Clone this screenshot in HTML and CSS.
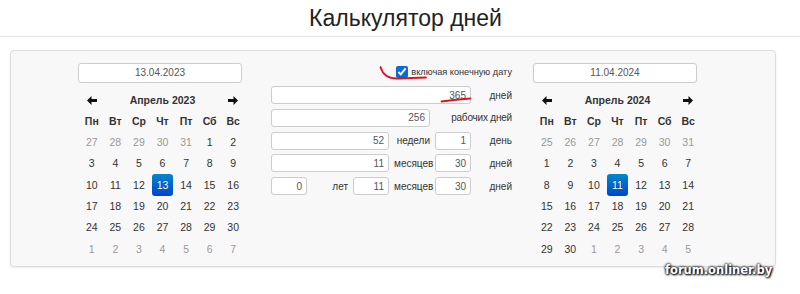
FILE: index.html
```html
<!DOCTYPE html>
<html lang="ru">
<head>
    <meta charset="UTF-8">
    <title>Калькулятор дней</title>
    <link rel="stylesheet" href="styles.css">
</head>
<body>
    <div class="page-head">
        <h1>Калькулятор дней</h1>
    </div>

    <div class="panel">
        <div class="cal-col">
            <input class="date-input" type="text" value="13.04.2023">
            <div class="cal" id="cal-start"></div>
        </div>

        <div class="mid">
            <label class="incl"><input type="checkbox" checked>включая конечную дату</label>
            <div class="calc">
                <input class="num span5" type="text" value="365"><span class="lbl">дней</span>
                <input class="num span4" type="text" value="256"><span class="lbl span2">рабочих дней</span>
                <input class="num span3" type="text" value="52"><span class="lbl">недели</span><input class="num" type="text" value="1"><span class="lbl">день</span>
                <input class="num span3" type="text" value="11"><span class="lbl">месяцев</span><input class="num" type="text" value="30"><span class="lbl">дней</span>
                <input class="num" type="text" value="0"><span class="lbl">лет</span><input class="num" type="text" value="11"><span class="lbl">месяцев</span><input class="num" type="text" value="30"><span class="lbl">дней</span>
            </div>
        </div>

        <div class="cal-col cal-right">
            <input class="date-input" type="text" value="11.04.2024">
            <div class="cal" id="cal-end"></div>
        </div>
    </div>

    <!-- red pen marks from the forum post -->
    <svg class="marks" width="800" height="294" viewBox="0 0 800 294">
        <path d="M380.5 67 Q384 79 398 78.5 L426 77.5" />
        <path d="M441.5 101.5 Q456 99.5 470.5 98.5" />
    </svg>

    <div class="watermark">forum.onliner.by</div>

    <script>
        const monthNames = ['Январь', 'Февраль', 'Март', 'Апрель', 'Май', 'Июнь',
            'Июль', 'Август', 'Сентябрь', 'Октябрь', 'Ноябрь', 'Декабрь'];
        const dayNames = ['Пн', 'Вт', 'Ср', 'Чт', 'Пт', 'Сб', 'Вс'];

        const arrowLeft = '<svg width="10" height="9" viewBox="0 0 10 9"><path d="M0 4.5 L4.5 0 V3 H10 V6 H4.5 V9 Z" fill="#111"/></svg>';
        const arrowRight = '<svg width="10" height="9" viewBox="0 0 10 9"><path d="M10 4.5 L5.5 0 V3 H0 V6 H5.5 V9 Z" fill="#111"/></svg>';

        function buildCal(id, year, month, selected) {
            const el = document.getElementById(id);
            let html = '<span class="nav">' + arrowLeft + '</span>';
            html += '<span class="month">' + monthNames[month] + ' ' + year + '</span>';
            html += '<span class="nav">' + arrowRight + '</span>';
            dayNames.forEach(d => { html += '<span class="dow">' + d + '</span>'; });

            // monday first; a full week of the previous month if the 1st is a monday
            let offset = (new Date(year, month, 1).getDay() + 6) % 7;
            if (offset === 0) offset = 7;
            const start = new Date(year, month, 1 - offset);

            for (let i = 0; i < 42; i++) {
                const d = new Date(start.getFullYear(), start.getMonth(), start.getDate() + i);
                let cls = 'day';
                if (d.getMonth() !== month) cls += ' old';
                if (d.getMonth() === month && d.getDate() === selected) cls += ' active';
                html += '<span class="' + cls + '">' + d.getDate() + '</span>';
            }
            el.innerHTML = html;
        }

        buildCal('cal-start', 2023, 3, 13);
        buildCal('cal-end', 2024, 3, 11);
    </script>
</body>
</html>
```

FILE: styles.css
```css
body {
    margin: 0;
    font-family: "Liberation Sans", Arial, sans-serif;
    color: #333;
    background: #fff;
    position: relative;
    height: 294px;
    overflow: hidden;
}
.page-head {
    height: 36px;
    border-bottom: 1px solid #e5e5e5;
    text-align: center;
}
.page-head h1 {
    margin: 0;
    font-size: 23px;
    font-weight: normal;
    line-height: 37px;
    color: #222;
    padding-left: 11px;
}
.panel {
    box-sizing: border-box;
    width: 766px;
    height: 217px;
    margin: 13px 0 0 10px;
    padding: 11px 0 0 67px;
    background-color: #f8f8f8;
    border: 1px solid #ddd;
    border-radius: 4px;
    box-shadow: 0 1px 2px rgba(0,0,0,0.08);
    display: flex;
    align-items: flex-start;
}
.cal-col {
    width: 167px;
}
.cal-right {
    margin-left: 21px;
}
.date-input {
    box-sizing: border-box;
    width: 164px;
    height: 20px;
    margin: 0;
    padding: 0 4px;
    border: 1px solid #ccc;
    border-radius: 3px;
    background: #fff;
    font-family: inherit;
    font-size: 10px;
    color: #555;
    text-align: center;
    outline: none;
}
.cal {
    margin: 7px 0 0 2px;
    width: 165px;
    display: grid;
    grid-template-columns: repeat(7, 1fr);
    grid-auto-rows: 21.33px;
    font-size: 10.5px;
    align-items: center;
    text-align: center;
}
.cal .nav {
    display: flex;
    justify-content: center;
    align-items: center;
}
.cal .month {
    grid-column: span 5;
    font-weight: bold;
    font-size: 10.5px;
}
.cal .dow {
    font-weight: bold;
}
.cal .day {
    height: 21.33px;
    line-height: 21.33px;
}
.cal .old {
    color: #999;
}
.cal .active {
    color: #fff;
    border-radius: 3px;
    background-image: linear-gradient(to bottom, #0088cc, #0044cc);
    text-shadow: 0 -1px 0 rgba(0,0,0,0.25);
    height: 22px;
    line-height: 22px;
    margin: 0 1px;
}
.mid {
    margin-left: 26px;
    width: 241px;
}
.incl {
    display: flex;
    justify-content: flex-end;
    align-items: center;
    height: 20px;
    margin-bottom: 4px;
    font-size: 9.2px;
    white-space: nowrap;
}
.incl input {
    width: 12px;
    height: 12px;
    margin: 0 3px 0 0;
    accent-color: #0a6ad8;
}
.calc {
    display: grid;
    grid-template-columns: repeat(6, 36px);
    grid-auto-rows: 18px;
    column-gap: 5px;
    row-gap: 4.8px;
    font-size: 10px;
}
.num {
    box-sizing: border-box;
    width: 100%;
    height: 18px;
    margin: 0;
    padding: 0 4px;
    border: 1px solid #ccc;
    border-radius: 3px;
    background: #fff;
    font-family: inherit;
    font-size: 10px;
    color: #555;
    text-align: right;
    outline: none;
}
.span2 { grid-column: span 2; }
.span3 { grid-column: span 3; }
.span4 { grid-column: span 4; }
.span5 { grid-column: span 5; }
.lbl {
    align-self: center;
    text-align: right;
    white-space: nowrap;
}
.span2.lbl {
    letter-spacing: -0.2px;
}
.marks {
    position: absolute;
    left: 0;
    top: 0;
    pointer-events: none;
}
.marks path {
    fill: none;
    stroke: #e0141e;
    stroke-width: 1.8;
    stroke-linecap: round;
}
.watermark {
    position: absolute;
    left: 665px;
    top: 263px;
    font-family: "DejaVu Sans", Verdana, sans-serif;
    font-weight: bold;
    font-size: 11.5px;
    color: #fff;
    text-shadow: 0 0 2px #000, 0 0 3px #000, 1px 1px 2px #000;
}
```
